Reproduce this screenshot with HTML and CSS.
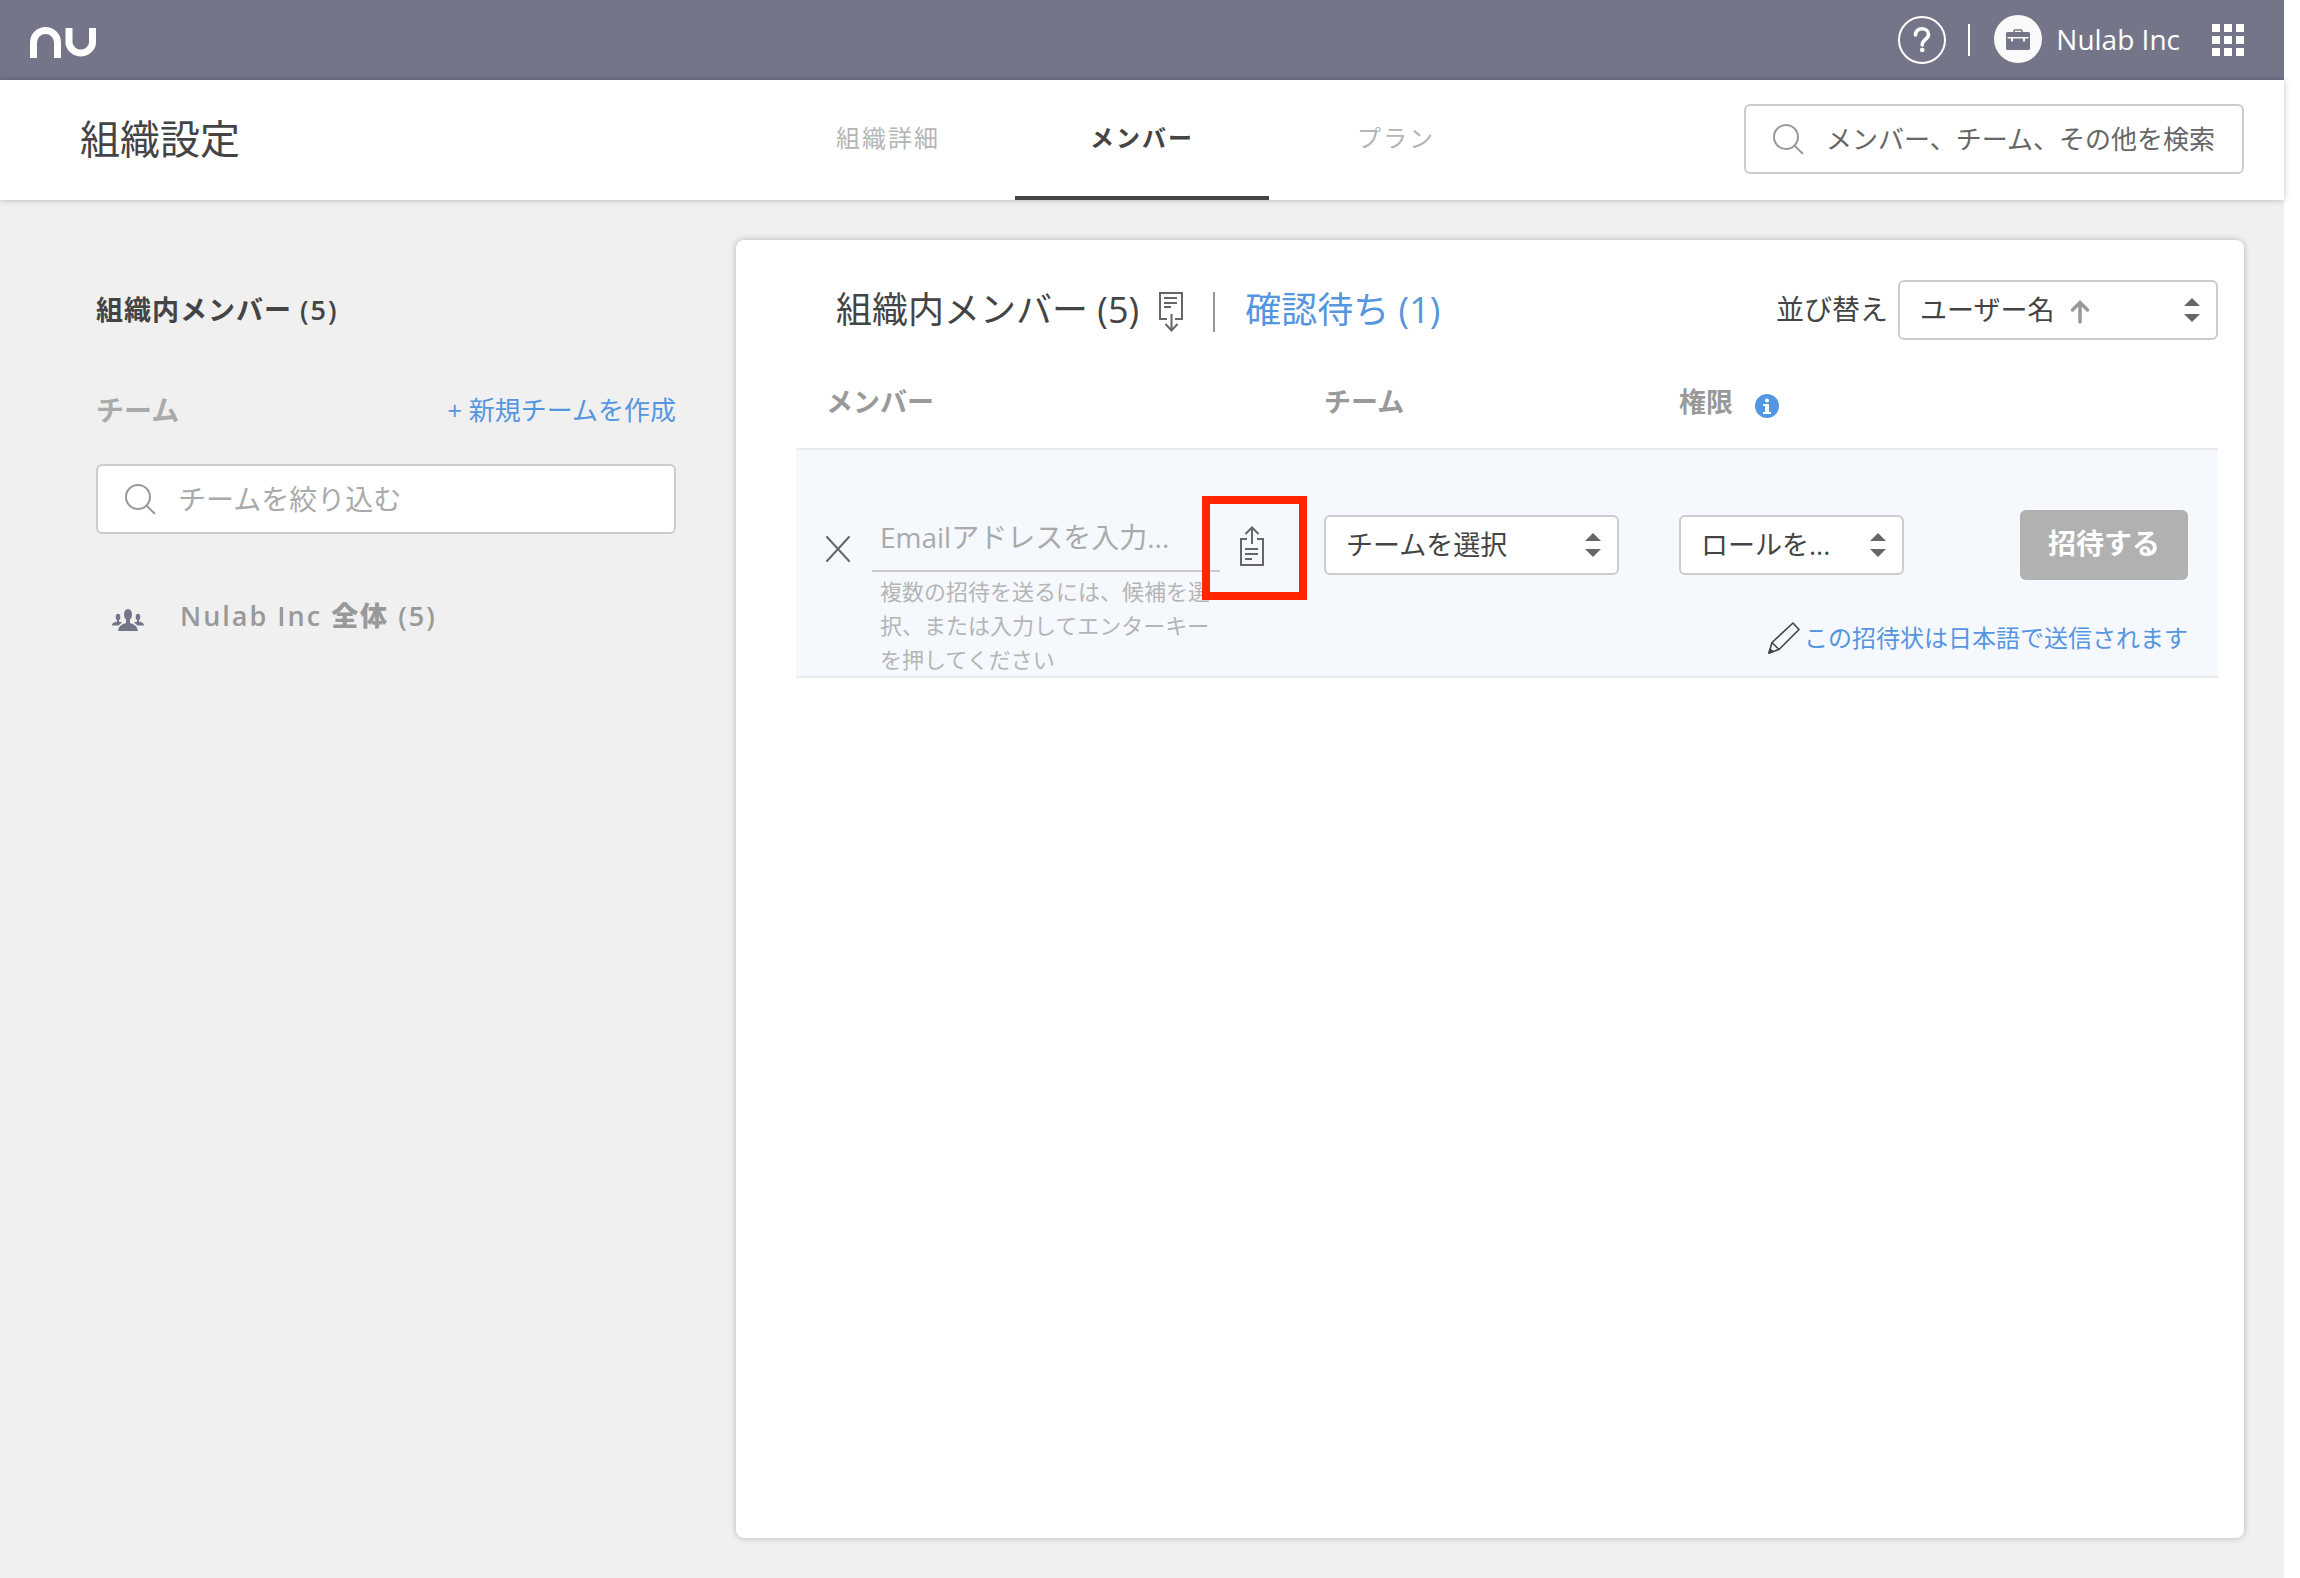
FILE: index.html
```html
<!DOCTYPE html>
<html lang="ja">
<head>
<meta charset="utf-8">
<title>組織設定</title>
<link rel="stylesheet" href="styles.css">
</head>
<body>
<div class="app">
  <header class="topbar">
    <a class="logo" href="#" aria-label="nu">
      <svg width="66" height="32" viewBox="0 0 66 32" fill="none" stroke="#fff" stroke-width="7"><path d="M3.500 31V15.500a12 12 0 0 1 24 0V31M39 1v15.500a12 12 0 0 0 23.500 0V1"/></svg>
    </a>
    <nav class="topbar-menu">
      <a class="help" href="#" aria-label="ヘルプ">
        <svg width="48" height="48" viewBox="0 0 48 48" fill="none" stroke="#fff"><circle cx="24" cy="24" r="23" stroke-width="2"/><path d="M17.500 19c0-4 2.800-6.300 6.500-6.300s6.500 2.400 6.500 5.800c0 5-6.300 5-6.300 10.500" stroke-width="3.600" stroke-linecap="round"/><circle cx="24.200" cy="34" r="2.300" fill="#fff" stroke="none"/></svg>
      </a>
      <span class="menu-divider"></span>
      <a class="account" href="#">
        <svg width="48" height="48" viewBox="0 0 48 48"><circle cx="24" cy="24" r="24" fill="#fafafa"/><path d="M20 17v-1q0-1 1-1h6q1 0 1 1v1" fill="none" stroke="#75758a" stroke-width="1.600"/><rect x="12" y="17" width="24" height="18" rx="1.500" fill="#75758a"/><path d="M13.500 22h21v1.500h-3.500v3h-2v-3h-10v3h-2v-3h-3.500z" fill="#fafafa"/></svg>
        <span class="account-name">Nulab Inc</span>
      </a>
      <a class="apps" href="#" aria-label="アプリ一覧">
        <svg width="32" height="32" viewBox="0 0 32 32" fill="#fff"><path d="M0 0h8v8H0zM12 0h8v8h-8zM24 0h8v8h-8zM0 12h8v8H0zM12 12h8v8h-8zM24 12h8v8h-8zM0 24h8v8H0zM12 24h8v8h-8zM24 24h8v8h-8z"/></svg>
      </a>
    </nav>
  </header>

  <div class="subheader">
    <h1 class="page-title">組織設定</h1>
    <nav class="tabs">
      <a class="tab" href="#">組織詳細</a>
      <a class="tab tab-active" href="#" aria-current="page">メンバー</a>
      <a class="tab" href="#">プラン</a>
    </nav>
    <label class="search search-global">
      <svg width="32" height="32" viewBox="0 0 32 32" fill="none" stroke="#999" stroke-width="2"><circle cx="14" cy="14" r="12"/><path d="M22.500 22.500L31 31"/></svg>
      <input class="search-input" type="text" aria-label="検索" placeholder="メンバー、チーム、その他を検索">
    </label>
  </div>

  <main class="content">
    <aside class="sidebar">
      <h2 class="sidebar-title">組織内メンバー <span class="count">(5)</span></h2>
      <div class="team-head">
        <h3 class="team-title">チーム</h3>
        <a class="link" href="#">+ 新規チームを作成</a>
      </div>
      <label class="search search-team">
        <svg width="32" height="32" viewBox="0 0 32 32" fill="none" stroke="#999" stroke-width="2"><circle cx="14" cy="14" r="12"/><path d="M22.500 22.500L31 31"/></svg>
        <input class="search-input" type="text" aria-label="チームを絞り込む" placeholder="チームを絞り込む">
      </label>
      <a class="team" href="#">
        <svg class="team-icon" width="32" height="22" viewBox="0 0 32 22" fill="#75758a"><ellipse cx="16" cy="5.500" rx="4" ry="5.500"/><path d="M14 9h4v5c3 1 7 2 8 8H6c1-6 5-7 8-8z"/><ellipse cx="6" cy="8" rx="2.300" ry="3.200"/><path d="M5 10h2v2.500l3 1-3.500 3H0c.5-3.500 3-3 5-4z"/><ellipse cx="26" cy="8" rx="2.300" ry="3.200"/><path d="M27 10h-2v2.500l-3 1 3.500 3H32c-.5-3.500-3-3-5-4z"/></svg>
        <span>Nulab Inc <b>全体</b> (5)</span>
      </a>
    </aside>

    <section class="panel">
      <div class="panel-head">
        <h2 class="panel-title">組織内メンバー (5)</h2>
        <button class="icon-button export" type="button" aria-label="エクスポート">
          <svg width="24" height="40" viewBox="0 0 24 40" fill="none" stroke="#666" stroke-width="2"><path d="M8 27H1V1h22v26h-7M5 6h13M5 11h13M5 15h7M12.500 22v17M6.500 32l6 6.500 6-6.500"/></svg>
        </button>
        <span class="panel-divider"></span>
        <a class="pending" href="#">確認待ち (1)</a>
        <label class="sort-label" for="sort">並び替え</label>
        <span class="select-box sort-box">
          <select id="sort" class="select"><option>ユーザー名</option></select>
          <svg class="sort-arrow" width="20" height="24" viewBox="0 0 20 24" fill="none" stroke="#999" stroke-width="3.500" stroke-linecap="round"><path d="M10 22V3M2.500 10L10 2.500l7.500 7.500"/></svg>
          <svg class="caret" width="16" height="24" viewBox="0 0 16 24" fill="#666"><path d="M0 8L8 0l8 8zM0 16h16l-8 8z"/></svg>
        </span>
      </div>

      <table class="members">
        <colgroup><col><col class="col-team"><col class="col-role"><col class="col-action"></colgroup>
        <thead>
          <tr>
            <th class="head-member" scope="col">メンバー</th>
            <th scope="col">チーム</th>
            <th scope="col" colspan="2"><span class="head-role">権限
              <svg class="info" width="24" height="24" viewBox="0 0 24 24"><circle cx="12" cy="12" r="12" fill="#5596e0"/><circle cx="12" cy="6.500" r="2" fill="#fff"/><path d="M8 10h6v8h2v2H8v-2h2v-6H8z" fill="#fff"/></svg></span></th>
          </tr>
        </thead>
        <tbody>
          <tr>
            <td class="cell-member" rowspan="2">
              <div class="invite">
                <button class="icon-button close" type="button" aria-label="閉じる">
                  <svg width="24" height="26" viewBox="0 0 24 26" fill="none" stroke="#666" stroke-width="2" stroke-linecap="round"><path d="M1 1l22 24M23 1L1 25"/></svg>
                </button>
                <div class="invite-field">
                  <input class="email" type="text" aria-label="Emailアドレス" placeholder="Emailアドレスを入力...">
                  <p class="hint">複数の招待を送るには、候補を選択、または入力してエンターキーを押してください</p>
                </div>
                <button class="icon-button upload" type="button" aria-label="ファイルから招待">
                  <svg width="24" height="40" viewBox="0 0 24 40" fill="none" stroke="#666" stroke-width="2"><path d="M7 13H1v26h22V13h-6M5 23h13M5 28h13M5 33h7M12 18V2M5.500 8L12 1.500 18.500 8"/></svg>
                </button>
              </div>
            </td>
            <td class="cell-select">
              <span class="select-box">
                <select class="select" aria-label="チーム"><option>チームを選択</option></select>
                <svg class="caret" width="16" height="24" viewBox="0 0 16 24" fill="#666"><path d="M0 8L8 0l8 8zM0 16h16l-8 8z"/></svg>
              </span>
            </td>
            <td class="cell-select">
              <span class="select-box">
                <select class="select" aria-label="権限"><option>ロールを...</option></select>
                <svg class="caret" width="16" height="24" viewBox="0 0 16 24" fill="#666"><path d="M0 8L8 0l8 8zM0 16h16l-8 8z"/></svg>
              </span>
            </td>
            <td class="cell-action"><button class="submit" type="button">招待する</button></td>
          </tr>
          <tr>
            <td class="cell-note" colspan="3">
              <a class="note" href="#"><svg width="32" height="32" viewBox="0 0 32 32" fill="none" stroke="#444" stroke-width="1.600" stroke-linejoin="round"><path d="M25 1l6 6.500L11 27.500 1 31l3-10.500zM4 20.500l7 7"/><path d="M1 31l1-4 3 2.500z" fill="#444"/></svg>この招待状は日本語で送信されます</a>
            </td>
          </tr>
        </tbody>
      </table>
    </section>
  </main>
</div>
</body>
</html>
```

FILE: styles.css
```css
*,
*::after {
  box-sizing: border-box;
}

body {
  margin: 0;
  background: #fff;
  color: #444;
  font-family: "Open Sans", "Noto Sans CJK JP", sans-serif;
  font-size: 28px;
  line-height: 40px;
}

h1, h2, h3, p {
  margin: 0;
}

a {
  color: inherit;
  text-decoration: none;
}

svg {
  display: block;
  flex: none;
}

input, select, button {
  font: inherit;
  color: inherit;
}

.app {
  display: flex;
  flex-direction: column;
  min-height: 100vh;
  margin-right: 16px;
  background: #f0f0f0;
}

/* Top bar */
.topbar {
  display: flex;
  align-items: center;
  justify-content: space-between;
  height: 80px;
  padding: 0 40px 0 30px;
  background: #75758a;
  color: #fff;
}

.logo {
  padding-top: 6px;
}

.topbar-menu,
.account {
  display: flex;
  align-items: center;
}

.menu-divider {
  width: 2px;
  height: 32px;
  margin: 0 24px 0 22px;
  background: #fff;
}

.account {
  gap: 14px;
  margin-right: 32px;
  padding-bottom: 2px;
}

/* Title and tabs */
.subheader {
  position: relative;
  display: flex;
  align-items: center;
  height: 120px;
  padding: 0 40px 0 80px;
  background: #fff;
  box-shadow: 0 0 6px rgba(0, 0, 0, .25);
}

.page-title {
  flex: 1;
  padding-bottom: 2px;
  font-size: 40px;
  font-weight: 400;
}

.tabs {
  display: flex;
  align-self: stretch;
}

.tab {
  width: 254px;
  border-bottom: 4px solid transparent;
  color: #b5b5b5;
  font-size: 24px;
  letter-spacing: 2px;
  line-height: 116px;
  text-align: center;
}

.tab-active {
  border-color: #444;
  color: #444;
  font-weight: 700;
}

/* Search boxes */
.search {
  display: flex;
  align-items: center;
  gap: 22px;
  height: 70px;
  padding: 0 26px;
  border: 2px solid #ccc;
  border-radius: 6px;
  background: #fff;
}

.search-global {
  width: 500px;
  margin: 0 0 2px 221px;
  font-size: 26px;
}

.search-global .search-input::placeholder {
  color: #666;
}

.search-input {
  flex: 1;
  min-width: 0;
  padding: 0;
  border: 0;
  outline: 0;
  background: none;
}

.search-input::placeholder,
.email::placeholder {
  color: #aaa;
  opacity: 1;
}

/* Sidebar */
.content {
  display: flex;
  flex: 1;
  padding: 40px 40px 40px 0;
}

.sidebar {
  flex: none;
  width: 736px;
  padding: 50px 60px 0 96px;
}

.sidebar-title {
  font-size: 27px;
  font-weight: 700;
  letter-spacing: 1px;
}

.count {
  font-weight: 600;
  letter-spacing: 2px;
}

.team-head {
  display: flex;
  align-items: center;
  justify-content: space-between;
  margin: 60px 0 34px;
}

.team-title {
  color: #aaa;
  font-size: 28px;
  font-weight: 700;
}

.link {
  color: #5596e0;
  font-size: 26px;
}

.team {
  display: flex;
  align-items: center;
  gap: 36px;
  margin-top: 62px;
  padding-left: 16px;
  color: #999;
  font-size: 27px;
  font-weight: 600;
  letter-spacing: 2px;
}

.team-icon {
  margin-top: 8px;
}

/* Main panel */
.panel {
  flex: 1;
  padding: 40px 26px 40px 60px;
  border-radius: 8px;
  background: #fff;
  box-shadow: 0 0 6px rgba(0, 0, 0, .25);
}

.panel-head {
  display: flex;
  align-items: center;
  height: 60px;
  padding-left: 40px;
}

.panel-title {
  font-size: 36px;
  font-weight: 400;
}

.icon-button {
  flex: none;
  padding: 0;
  border: 0;
  background: none;
}

.export {
  margin: 4px 0 0 20px;
}

.panel-divider {
  width: 2px;
  height: 40px;
  margin: 4px 30px 0;
  background: #999;
}

.pending {
  color: #5596e0;
  font-size: 36px;
}

.sort-label {
  margin: 0 10px 2px auto;
}

.select-box {
  position: relative;
  display: block;
}

.sort-box {
  width: 320px;
}

.select {
  display: block;
  width: 100%;
  height: 60px;
  padding: 0 44px 0 20px;
  border: 2px solid #ccc;
  border-radius: 6px;
  background: #fff;
  font-size: 27px;
  appearance: none;
}

.caret {
  position: absolute;
  top: 18px;
  right: 18px;
  pointer-events: none;
}

.sort-arrow {
  position: absolute;
  top: 20px;
  left: 172px;
  pointer-events: none;
}

/* Members table */
.members {
  width: 100%;
  border-spacing: 0;
  table-layout: fixed;
}

.col-team {
  width: 355px;
}

.col-role {
  width: 285px;
}

.col-action {
  width: 254px;
}

.members th {
  height: 108px;
  padding: 16px 0 0;
  color: #999;
  font-size: 27px;
  font-weight: 600;
  text-align: left;
  vertical-align: middle;
}

.members .head-member {
  padding-left: 30px;
}

.head-role {
  display: flex;
  align-items: center;
  gap: 22px;
}

.info {
  margin-top: 8px;
}

.members td {
  padding: 0;
  background: #f5f8fd;
  vertical-align: top;
}

.members .cell-member {
  padding: 62px 60px 0 30px;
  border-top: 2px solid #ececec;
  border-bottom: 2px solid #ececec;
}

.invite {
  display: flex;
}

.close {
  align-self: flex-start;
  margin: 24px 22px 0 0;
}

.invite-field {
  flex: 1;
  min-width: 0;
}

.email {
  display: block;
  width: 100%;
  height: 60px;
  padding: 0 8px 8px;
  border: 0;
  border-bottom: 2px solid #ccc;
  outline: 0;
  background: none;
}

.hint {
  padding: 2px 8px 0;
  color: #b5b5b5;
  font-size: 22px;
  line-height: 34px;
}

.upload {
  position: relative;
  align-self: flex-start;
  margin: 14px 0 0 20px;
}

.upload::after {
  content: "";
  position: absolute;
  top: -30px;
  left: -38px;
  width: 105px;
  height: 104px;
  border: 8px solid #ff2600;
}

.members .cell-select {
  height: 156px;
  padding: 65px 60px 0 0;
  border-top: 2px solid #ececec;
}

.members .cell-action {
  padding: 60px 30px 0 56px;
  border-top: 2px solid #ececec;
}

.submit {
  display: block;
  width: 100%;
  height: 70px;
  padding: 0 0 4px;
  border: 0;
  border-radius: 6px;
  background: #b1b1b1;
  color: #fff;
  font-weight: 700;
}

.members .cell-note {
  padding: 14px 30px 0 0;
  border-bottom: 2px solid #ececec;
}

.note {
  display: flex;
  align-items: center;
  justify-content: flex-end;
  gap: 4px;
  color: #5596e0;
  font-size: 24px;
}
```
